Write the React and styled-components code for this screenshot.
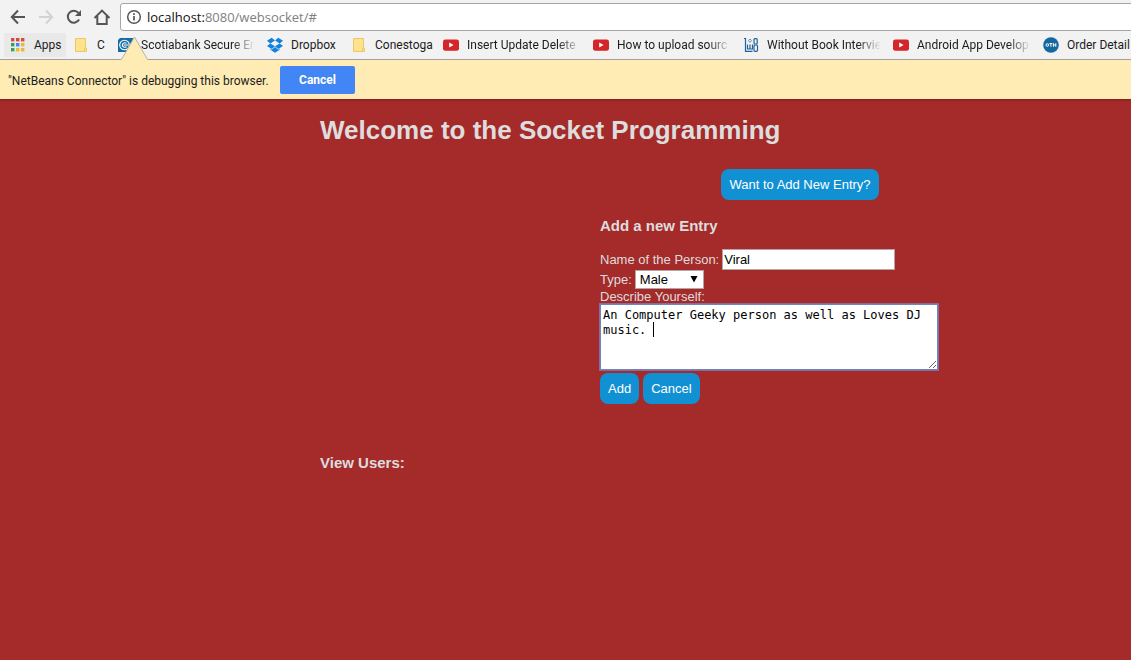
import React, { useState } from "react";
import styled, { createGlobalStyle } from "styled-components";

const GlobalStyle = createGlobalStyle`
  *, *::before, *::after { box-sizing: border-box; }
  html, body { margin: 0; background: #a52a2a; }
  body { font-family: "Liberation Sans", Arial, sans-serif; font-size: 13px; overflow-x: hidden; }
`;

const uiFont = `Roboto, "Open Sans", sans-serif`;

const Chrome = styled.header`
  font-family: ${uiFont};
  background: #f2f2f2;
  color: #1c1c1c;
`;

const Toolbar = styled.nav`
  display: flex;
  align-items: center;
  height: 31px;
  padding: 3px 0 0 10px;
`;

const NavButton = styled.button`
  display: flex;
  justify-content: center;
  width: 16px;
  height: 28px;
  align-items: center;
  margin-right: 12px;
  padding: 0;
  border: 0;
  background: none;
  color: ${(p) => (p.disabled ? "#d2d2d2" : "#555")};
  svg { flex: none; }
`;

const AddressBar = styled.div`
  flex: 1;
  display: flex;
  align-items: center;
  gap: 5px;
  height: 28px;
  margin: 0 -4px 0 -2px;
  padding-left: 5px;
  border: 1px solid #a6a6a6;
  border-radius: 3px;
  background: #fff;
  color: #555;
`;

const Url = styled.span`
  font: 13px/20px "Open Sans", "Noto Sans", sans-serif;
  color: #808080;
  b { font-weight: 400; color: #111; }
`;

const Bookmarks = styled.nav`
  display: flex;
  align-items: center;
  gap: 12px;
  height: 29px;
  padding-left: 10px;
  border-bottom: 1px solid #a9a9a9;
  overflow: hidden;
`;

const Bookmark = styled.a`
  flex: none;
  display: flex;
  align-items: center;
  gap: 8px;
  height: 24px;
  color: inherit;
  text-decoration: none;
  font-size: 12px;
  line-height: 16px;
  background: ${(p) => (p.$active ? "#e9e9e9" : "none")};
  box-shadow: ${(p) => (p.$active ? "-6px 0 #e9e9e9, 5px 0 #e9e9e9" : "none")};
  svg { flex: none; }
`;

const BookmarkText = styled.span`
  width: ${(p) => p.$width}px;
  overflow: ${(p) => (p.$fade ? "hidden" : "visible")};
  white-space: nowrap;
  mask-image: ${(p) => (p.$fade ? "linear-gradient(to right, #000 80%, transparent)" : "none")};
`;

const InfoBar = styled.aside`
  position: relative;
  display: flex;
  align-items: center;
  gap: 10px;
  height: 39px;
  padding-left: 8px;
  background: #ffebb4;
  font-size: 12px;
  box-shadow: 0 1px 2px #7a2018;
`;

const InfoText = styled.span`
  width: 262px;
  padding-top: 2px;
  white-space: nowrap;
`;

const InfoArrow = styled.svg`
  position: absolute;
  left: 120px;
  top: -24px;
`;

const InfoButton = styled.button`
  width: 75px;
  height: 28px;
  padding: 0;
  border: 0;
  border-radius: 2px;
  background: #4285f4;
  color: #fff;
  font: 700 12px/16px ${uiFont};
`;

const Page = styled.main`
  padding: 16px 16px 16px 320px;
  color: #ddd;
`;

const Title = styled.h1`
  margin: 0;
  font-size: 26px;
  line-height: 30px;
`;

const Entry = styled.section`
  max-width: 400px;
  margin: 24px 0 0 280px;
`;

const Subtitle = styled.h3`
  margin: 0;
  font-size: 15px;
  line-height: 18px;
`;

const Actions = styled.div`
  display: flex;
  justify-content: ${(p) => (p.$centered ? "center" : "flex-start")};
  gap: 4px;
  margin-bottom: ${(p) => (p.$centered ? 17 : 0)}px;
`;

const PillButton = styled.button`
  height: 31px;
  padding: 0 8px;
  border: 0;
  border-radius: 8px;
  background: #1190d4;
  color: #fff;
  font: 13px/16px "Liberation Sans", Arial, sans-serif;
`;

const Form = styled.form`
  margin-top: 14px;
`;

const Field = styled.div`
  display: flex;
  align-items: center;
  gap: 3px;
  height: ${(p) => p.$height}px;
`;

const Label = styled.label`
  line-height: 15px;
  white-space: nowrap;
`;

const TextInput = styled.input`
  width: 173px;
  height: 21px;
  padding: 1px;
  border: 1px solid #b5a5a5;
  background: #fff;
  color: #000;
  font: 13px "Liberation Sans", Arial, sans-serif;
`;

const SelectBox = styled.span`
  position: relative;
  display: flex;
  svg { position: absolute; right: 6px; top: 6px; pointer-events: none; }
`;

const Select = styled.select`
  appearance: none;
  width: 69px;
  height: 19px;
  padding: 0 4px;
  border: 1px solid #b5a5a5;
  border-radius: 0;
  background: #fff;
  color: #000;
  font: 13px "Liberation Sans", Arial, sans-serif;
`;

const AreaBox = styled.div`
  position: relative;
  display: flex;
  margin-bottom: 3px;
`;

const TextArea = styled.textarea`
  width: 338px;
  height: 66px;
  padding: 3px 2px;
  border: 1px solid #6a86c8;
  outline: 1px solid #8a6a98;
  outline-offset: 0;
  background: #fff;
  color: #000;
  font: 12px/15px "DejaVu Sans Mono", monospace;
`;

const Caret = styled.i`
  position: absolute;
  left: 53px;
  top: 18px;
  width: 1px;
  height: 15px;
  background: #000;
`;

const Users = styled.section`
  margin-top: 50px;
`;

const Stroke = ({ children, width = 2 }) => (
  <svg width="16" height="16" viewBox="0 0 16 16" fill="none" stroke="currentColor" strokeWidth={width}>
    {children}
  </svg>
);

const BackIcon = () => <Stroke><path d="M15 8H2M8 1.5 1.8 8 8 14.5" /></Stroke>;
const ForwardIcon = () => <Stroke><path d="M1 8h13M8 1.5 14.2 8 8 14.5" /></Stroke>;
const ReloadIcon = () => (
  <Stroke>
    <path d="M13.1 10.6A6 6 0 1 1 12.4 3.8" />
    <path d="M15 1v6H9z" fill="currentColor" stroke="none" />
  </Stroke>
);
const HomeIcon = () => (
  <svg width="18" height="16" viewBox="0 0 18 16" fill="none" stroke="currentColor" strokeWidth="2">
    <path d="M1.5 9 9 1.6 16.5 9M4.3 7v8h9.4V7" />
  </svg>
);
const InfoIcon = () => (
  <Stroke width={1.5}>
    <circle cx="8" cy="8" r="6.3" />
    <path d="M8 7v4.5M8 4.3v1.6" strokeWidth="1.7" />
  </Stroke>
);

const AppsIcon = () => {
  const colors = ["#d9483b", "#d9483b", "#d9483b", "#32a05f", "#4285f4", "#edb92e", "#32a05f", "#edb92e", "#edb92e"];
  return (
    <svg width="16" height="16" viewBox="0 0 16 16">
      {colors.map((c, i) => (
        <rect key={i} x={1 + (i % 3) * 5} y={1 + Math.floor(i / 3) * 5} width="3.4" height="3.4" fill={c} />
      ))}
    </svg>
  );
};
const FolderIcon = () => (
  <svg width="16" height="16" viewBox="0 0 16 16">
    <path d="M2.5 1.5h10v9.5h1v3.5h-11z" fill="#ffe38c" stroke="#e9c866" />
    <path d="M11.5 14.5v-3.5h1" fill="none" stroke="#e9c866" />
  </svg>
);
const ScotiaIcon = () => (
  <svg width="16" height="16" viewBox="0 0 16 16">
    <path d="M3 1h13v13l-2 1H1V3z" fill="#146ca4" />
    <g fill="none" stroke="#fff" strokeWidth="1.1">
      <circle cx="7.5" cy="8" r="4.8" />
      <path d="M9.5 6.3c-1.5-1-4.2-.6-4.2 1.7s2.700 2.700 4.200 1.700M6.500 8h5" />
    </g>
  </svg>
);
const DropboxIcon = () => (
  <svg width="16" height="16" viewBox="0 0 16 16" fill="#1081de">
    <path d="M4.7.8 8 3.5 3.3 6.4 0 3.8zM11.3.8 16 3.8l-3.3 2.6L8 3.5zM0 9l3.3-2.6L8 9.3 4.7 12zM16 9l-3.3-2.6L8 9.3l3.300 2.700zM8 10l3.300 2.700 1.400-.9v1L8 15.700l-4.700-2.900v-1l1.400.9z" />
  </svg>
);
const VideoIcon = () => (
  <svg width="16" height="16" viewBox="0 0 16 16">
    <rect y="2.4" width="16" height="11.4" rx="2.4" fill="#d3252a" />
    <path d="M6.2 5.6v4.8l4.4-2.4z" fill="#fff" />
  </svg>
);
const BookIcon = () => (
  <svg width="16" height="16" viewBox="0 0 16 16" fill="none" stroke="#1e6299" strokeWidth="1.2">
    <path d="M1 1.500h1.500v12.800h3M4.500 7.500v4.500h5V7.500M7 7.500v4.500M5.500 14.300h4" />
    <rect x="11" y="1.700" width="3.200" height="5.300" rx="1" />
    <rect x="11" y="8" width="3.500" height="6.300" rx="1" />
    <path d="m7 2 1.500 1.700L7 5.400 5.500 3.700z" strokeWidth=".7" />
  </svg>
);
const OthIcon = () => (
  <svg width="16" height="16" viewBox="0 0 16 16">
    <circle cx="8" cy="8" r="7.8" fill="#14679f" />
    <g fill="none" stroke="#fff">
      <circle cx="4.3" cy="8" r="1.3" />
      <path d="M6.400 6.500h3M7.900 6.500v3.300M10.400 6.200v3.600M12.800 6.200v3.600M10.400 8h2.400" />
    </g>
  </svg>
);

const bookmarks = [
  { text: "Apps", Icon: AppsIcon, width: 27, active: true },
  { text: "C", Icon: FolderIcon, width: 8 },
  { text: "Scotiabank Secure En", Icon: ScotiaIcon, width: 114, fade: true },
  { text: "Dropbox", Icon: DropboxIcon, width: 48 },
  { text: "Conestoga", Icon: FolderIcon, width: 56 },
  { text: "Insert Update Delete", Icon: VideoIcon, width: 114, fade: true },
  { text: "How to upload sourc", Icon: VideoIcon, width: 114, fade: true },
  { text: "Without Book Intervie", Icon: BookIcon, width: 114, fade: true },
  { text: "Android App Develop", Icon: VideoIcon, width: 114, fade: true },
  { text: "Order Detail", Icon: OthIcon, width: 114 },
];

export default function App() {
  const [name, setName] = useState("Viral");
  const [about, setAbout] = useState("An Computer Geeky person as well as Loves DJ music. ");
  return (
    <>
      <GlobalStyle />
      <Chrome>
        <Toolbar aria-label="Browser">
          <NavButton aria-label="Back"><BackIcon /></NavButton>
          <NavButton aria-label="Forward" disabled><ForwardIcon /></NavButton>
          <NavButton aria-label="Reload"><ReloadIcon /></NavButton>
          <NavButton aria-label="Home"><HomeIcon /></NavButton>
          <AddressBar>
            <InfoIcon />
            <Url><b>localhost:</b>8080/websocket/#</Url>
          </AddressBar>
        </Toolbar>
        <Bookmarks aria-label="Bookmarks">
          {bookmarks.map(({ text, Icon, width, fade, active }) => (
            <Bookmark key={text} href="#" $active={active}>
              <Icon />
              <BookmarkText $width={width} $fade={fade}>{text}</BookmarkText>
            </Bookmark>
          ))}
        </Bookmarks>
        <InfoBar>
          <InfoArrow width="30" height="25" viewBox="0 0 30 25">
            <path d="M0 25 1.5 23.5 14.5 1 27.5 23.5 29 25z" fill="#ffebb4" />
            <path d="M0 23.5h1.5L14.5 1l13 22.5H29" fill="none" stroke="#b9b3a5" />
          </InfoArrow>
          <InfoText>"NetBeans Connector" is debugging this browser.</InfoText>
          <InfoButton>Cancel</InfoButton>
        </InfoBar>
      </Chrome>
      <Page>
        <Title>Welcome to the Socket Programming</Title>
        <Entry>
          <Actions $centered>
            <PillButton>Want to Add New Entry?</PillButton>
          </Actions>
          <Subtitle>Add a new Entry</Subtitle>
          <Form onSubmit={(e) => e.preventDefault()}>
            <Field $height={21}>
              <Label htmlFor="name">Name of the Person:</Label>
              <TextInput id="name" value={name} onChange={(e) => setName(e.target.value)} />
            </Field>
            <Field $height={19}>
              <Label htmlFor="type">Type:</Label>
              <SelectBox>
                <Select id="type" defaultValue="Male">
                  <option>Male</option>
                  <option>Female</option>
                </Select>
                <svg width="8" height="7" viewBox="0 0 8 7"><path d="M.5 0h7L4 6.500z" /></svg>
              </SelectBox>
            </Field>
            <Field $height={15}>
              <Label htmlFor="about">Describe Yourself:</Label>
            </Field>
            <AreaBox>
              <TextArea id="about" spellCheck={false} value={about} onChange={(e) => setAbout(e.target.value)} />
              <Caret />
            </AreaBox>
            <Actions>
              <PillButton type="submit">Add</PillButton>
              <PillButton type="reset">Cancel</PillButton>
            </Actions>
          </Form>
        </Entry>
        <Users>
          <Subtitle>View Users:</Subtitle>
        </Users>
      </Page>
    </>
  );
}
